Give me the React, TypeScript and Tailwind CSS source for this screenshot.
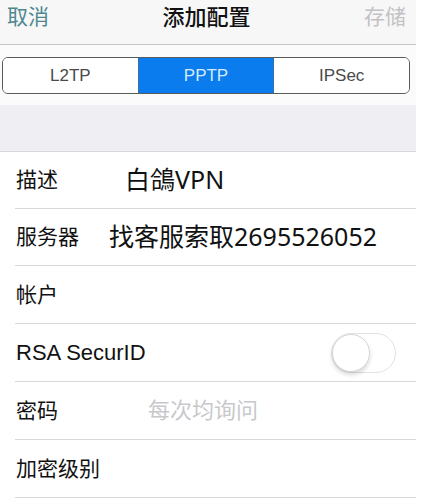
import React from 'react';

const font = { fontFamily: '"Liberation Sans", "Noto Sans CJK SC", sans-serif' };
const valueFont = { fontFamily: '"Noto Sans", "Noto Sans CJK SC", sans-serif' };

function Row({
  label,
  children,
  h = 'h-[58px]',
}: {
  label: string;
  children?: React.ReactNode;
  h?: string;
}) {
  return (
    <div className={`ml-[15px] ${h} border-b border-[#d8d8dc] flex items-center pl-[1px]`}>
      <span className="text-[21px] text-[#111] whitespace-nowrap">{label}</span>
      {children}
    </div>
  );
}

export default function App() {
  return (
    <div className="w-[425px] h-[500px] bg-white overflow-hidden" style={font}>
      <div className="w-[416px]">
        {/* Nav bar */}
        <div className="h-[45px] bg-[#f7f7f8] border-b border-[#c4c4c8] flex items-center justify-between pl-[7px] pr-[10px] pb-[10px]">
          <span className="text-[21px] text-[#4f878f]">取消</span>
          <span className="text-[22px] font-medium text-[#111]">添加配置</span>
          <span className="text-[21px] text-[#c2c2c4]">存储</span>
        </div>

        {/* Segmented control */}
        <div className="bg-[#fbfbfb] pt-[12px] pb-[11px] pl-[2px] pr-[6px]">
          <div className="h-[37px] flex border border-[#5a5a5a] rounded-[6px] overflow-hidden text-[17px]">
            <div className="flex-1 flex items-center justify-center bg-white text-[#4a4a4a]">L2TP</div>
            <div className="flex-1 flex items-center justify-center bg-[#0a7ced] text-[#d6ebff] border-x border-[#3a6fa8]">PPTP</div>
            <div className="flex-1 flex items-center justify-center bg-white text-[#4a4a4a]">IPSec</div>
          </div>
        </div>

        {/* Grouped spacer */}
        <div className="h-[47px] bg-[#efeff3] border-b border-[#d8d8dc]" />

        {/* Form rows */}
        <Row label="描述" h="h-[57px]">
          <span className="ml-[67px] text-[25px] text-[#111]" style={valueFont}>白鴿VPN</span>
        </Row>
        <Row label="服务器" h="h-[57px]">
          <span className="ml-[30px] text-[25px] text-[#111]" style={valueFont}>找客服索取2695526052</span>
        </Row>
        <Row label="帐户" />
        <div className="ml-[15px] h-[58px] border-b border-[#d8d8dc] flex items-center justify-between pl-[1px] pr-[20px]">
          <span className="text-[22px] text-[#111]">RSA SecurID</span>
          <div className="w-[65px] h-[40px] rounded-full border border-[#e2e2e4] bg-white flex items-center">
            <div className="w-[38px] h-[38px] rounded-full bg-white border border-[#d6d6d8] shadow-[0_3px_4px_rgba(0,0,0,0.15)]" />
          </div>
        </div>
        <Row label="密码">
          <span className="ml-[90px] text-[22px] text-[#c8c8cc]">每次均询问</span>
        </Row>
        <Row label="加密级别" />
      </div>
    </div>
  );
}
